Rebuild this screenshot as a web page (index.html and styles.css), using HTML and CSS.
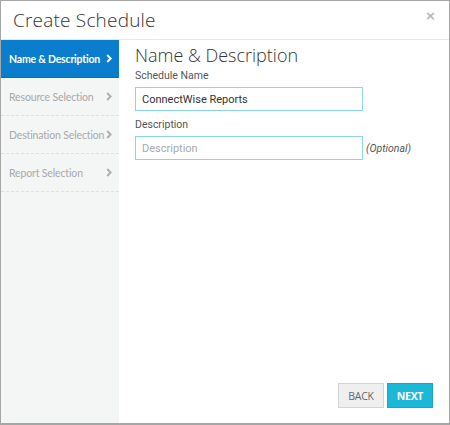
FILE: index.html
```html
<!DOCTYPE html>
<html>
<head>
<meta charset="utf-8">
<link rel="stylesheet" href="styles.css">
</head>
<body>
<div class="dialog">
  <div class="header">
    <h1 class="title">Create Schedule</h1>
    <span class="close">&times;</span>
  </div>
  <div class="body">
    <nav class="sidebar">
      <div class="nav-item active"><span class="txt">Name &amp; Description</span><svg class="chev" width="6" height="9" viewBox="0 0 6 9"><path d="M1.2 1 L4.6 4.5 L1.2 8" fill="none" stroke="currentColor" stroke-width="2"/></svg></div>
      <div class="nav-item"><span class="txt">Resource Selection</span><svg class="chev" width="6" height="9" viewBox="0 0 6 9"><path d="M1.2 1 L4.6 4.5 L1.2 8" fill="none" stroke="currentColor" stroke-width="2"/></svg></div>
      <div class="nav-item"><span class="txt">Destination Selection</span><svg class="chev" width="6" height="9" viewBox="0 0 6 9"><path d="M1.2 1 L4.6 4.5 L1.2 8" fill="none" stroke="currentColor" stroke-width="2"/></svg></div>
      <div class="nav-item"><span class="txt">Report Selection</span><svg class="chev" width="6" height="9" viewBox="0 0 6 9"><path d="M1.2 1 L4.6 4.5 L1.2 8" fill="none" stroke="currentColor" stroke-width="2"/></svg></div>
    </nav>
    <main class="main">
      <h2 class="heading">Name &amp; Description</h2>
      <label class="label first">Schedule Name</label>
      <div class="row"><input class="field" type="text" value="ConnectWise Reports"></div>
      <label class="label">Description</label>
      <div class="row"><input class="field" type="text" placeholder="Description"><span class="optional">(Optional)</span></div>
      <div class="actions">
        <button class="btn back">BACK</button>
        <button class="btn next">NEXT</button>
      </div>
    </main>
  </div>
</div>
</body>
</html>
```
FILE: styles.css
```css
html, body { margin: 0; padding: 0; }
body { width: 450px; height: 425px; background: #fff; }
.dialog {
  width: 450px; height: 425px; box-sizing: border-box;
  border: 1px solid #a6a6a6; border-bottom-width: 2px;
  display: flex; flex-direction: column;
  font-family: "Open Sans", sans-serif;
}
.header {
  height: 38px; border-bottom: 1px solid #e8e8e8;
  display: flex; align-items: center; justify-content: space-between;
  padding: 0 13px 0 12px; flex: none;
}
.title {
  margin: 0; font-family: "Open Sans", sans-serif; font-weight: 300;
  font-size: 19px; color: #333; letter-spacing: 0.2px;
}
.close { color: #b5b5b5; font-size: 13px; font-weight: 700; margin-top: -10px; font-family: "DejaVu Sans", sans-serif; }
.body { flex: 1; display: flex; min-height: 0; }
.sidebar { width: 118px; background: #f4f5f5; flex: none; }
.nav-item {
  height: 37px; border-bottom: 1px dashed #dfe0e0;
  display: flex; align-items: center; justify-content: space-between;
  padding: 0 7px 0 8px; font-family: Lato, sans-serif; font-size: 10.5px; color: #a9a9a9;
  white-space: nowrap; letter-spacing: -0.15px;
}
.nav-item .chev { color: #b0b0b0; flex: none; margin-left: 2px; }
.nav-item.active { background: #0a7dcd; color: #fff; font-weight: 700; border-bottom: 1px solid #0a6fb8; letter-spacing: -0.2px; }
.nav-item.active .chev { color: #fff; }
.main {
  flex: 1; display: flex; flex-direction: column;
  padding: 3px 16px 15px 16px; font-family: Roboto, "Liberation Sans", sans-serif;
}
.heading {
  margin: 0; font-family: "Open Sans", sans-serif; font-weight: 300;
  font-size: 18px; color: #333; line-height: 24px;
}
.label { font-size: 10.5px; color: #555; margin-top: 7px; line-height: 14px; }
.label.first { margin-top: 2px; }
.row { display: flex; align-items: center; margin-top: 4px; }
.field {
  width: 228px; height: 24px; box-sizing: border-box;
  border: 1px solid #8ad6e6; padding: 0 6px; font-family: Roboto, "Liberation Sans", sans-serif;
  font-size: 11px; color: #333; outline: none; margin: 0;
}
.field::placeholder { color: #aaa; }
.optional { font-style: italic; font-size: 10.5px; color: #555; margin-left: 3px; }
.actions { margin-top: auto; display: flex; justify-content: flex-end; gap: 3px; }
.btn {
  height: 25px; box-sizing: border-box; font-family: "Open Sans", sans-serif;
  font-size: 10.5px; padding: 0; cursor: pointer; letter-spacing: -0.3px;
}
.back { width: 46px; background: #efefef; border: 1px solid #d4d4d4; color: #666; }
.next { width: 46px; background: #1cb8d8; border: 1px solid #18a9c8; color: #fff; font-weight: 700; }
```
